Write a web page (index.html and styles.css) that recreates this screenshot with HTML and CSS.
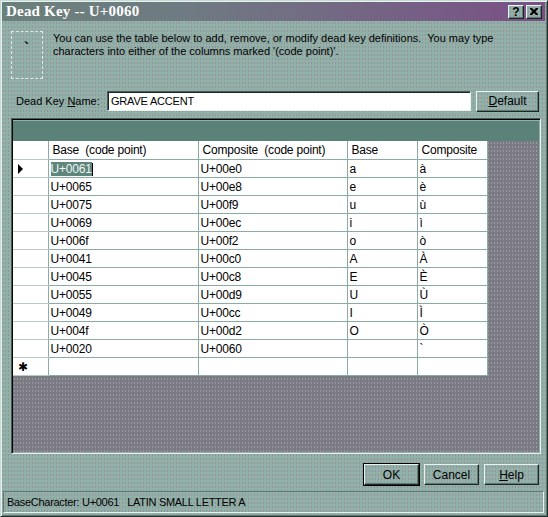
FILE: index.html
```html
<!DOCTYPE html>
<html lang="en">
<head>
    <meta charset="UTF-8">
    <title>Dead Key -- U+0060</title>
    <link rel="stylesheet" href="styles.css">
</head>
<body>

    <div class="window">
        <div class="titlebar">
            <span class="title">Dead Key -- U+0060</span>
            <div class="capbuttons">
                <span class="capbtn">?</span>
                <span class="capbtn">
                    <svg width="8" height="7" viewBox="0 0 8 7">
                        <path d="M0 0h2l2 2 2-2h2v1l-2.5 2.5 2.5 2.5v1h-2l-2-2-2 2h-2v-1l2.5-2.5-2.5-2.5z" fill="#000"/>
                    </svg>
                </span>
            </div>
        </div>

        <div class="content">
            <div class="intro">
                <div class="keybox">`</div>
                <p class="introtext">You can use the table below to add, remove, or modify dead key definitions.&nbsp; You may type characters into either of the columns marked '(code point)'.</p>
            </div>

            <div class="namerow">
                <label class="namelabel">Dead Key <u>N</u>ame:</label>
                <div class="namebox">GRAVE ACCENT</div>
                <span class="btn defaultbtn"><u>D</u>efault</span>
            </div>

            <div class="grid">
                <div class="caption"></div>
                <div class="gridarea">
                    <table class="keys">
                        <colgroup>
                            <col class="c0"><col class="c1"><col class="c2"><col class="c3"><col class="c4">
                        </colgroup>
                        <tr class="head">
                            <td class="rowhead"></td>
                            <td>Base  (code point)</td>
                            <td>Composite  (code point)</td>
                            <td>Base</td>
                            <td>Composite</td>
                        </tr>
                        <tr>
                            <td class="rowhead"><span class="arrow"></span></td>
                            <td><span class="selected">U+0061</span><span class="caret"></span></td>
                            <td>U+00e0</td><td>a</td><td>à</td>
                        </tr>
                        <tr><td class="rowhead"></td><td>U+0065</td><td>U+00e8</td><td>e</td><td>è</td></tr>
                        <tr><td class="rowhead"></td><td>U+0075</td><td>U+00f9</td><td>u</td><td>ù</td></tr>
                        <tr><td class="rowhead"></td><td>U+0069</td><td>U+00ec</td><td>i</td><td>ì</td></tr>
                        <tr><td class="rowhead"></td><td>U+006f</td><td>U+00f2</td><td>o</td><td>ò</td></tr>
                        <tr><td class="rowhead"></td><td>U+0041</td><td>U+00c0</td><td>A</td><td>À</td></tr>
                        <tr><td class="rowhead"></td><td>U+0045</td><td>U+00c8</td><td>E</td><td>È</td></tr>
                        <tr><td class="rowhead"></td><td>U+0055</td><td>U+00d9</td><td>U</td><td>Ù</td></tr>
                        <tr><td class="rowhead"></td><td>U+0049</td><td>U+00cc</td><td>I</td><td>Ì</td></tr>
                        <tr><td class="rowhead"></td><td>U+004f</td><td>U+00d2</td><td>O</td><td>Ò</td></tr>
                        <tr><td class="rowhead"></td><td>U+0020</td><td>U+0060</td><td></td><td>`</td></tr>
                        <tr><td class="rowhead star">✱</td><td></td><td></td><td></td><td></td></tr>
                    </table>
                </div>
            </div>

            <div class="buttonrow">
                <span class="btn okbtn">OK</span>
                <span class="btn">Cancel</span>
                <span class="btn"><u>H</u>elp</span>
            </div>
        </div>

        <div class="statusbar">BaseCharacter: U+0061   LATIN SMALL LETTER A</div>
    </div>

</body>
</html>
```

FILE: styles.css
```css
html{
    margin: 0;
}

body{
    margin: 0;
    width: 548px;
    height: 517px;
    overflow: hidden;
    font-family: "Liberation Sans", Arial, sans-serif;
    font-size: 11px;
    color: #000;
}

/* the dithered teal face colour */
.window, .capbtn, .btn, .rowhead, .head td{
    background-color: #91b0a8;
    background-image: radial-gradient(circle, rgba(150,110,140,0.45) 0.6px, transparent 0.9px);
    background-size: 3px 4px;
}

.window{
    box-sizing: border-box;
    width: 548px;
    height: 517px;
    border: 1px solid;
    border-color: #c6dad4 #22302c #22302c #c6dad4;
    box-shadow: inset 1px 1px 0 #e8f2ef, inset -1px -1px 0 #5f7a73;
    padding: 1px 2px 2px 1px;
    display: flex;
    flex-direction: column;
}

.titlebar{
    height: 19px;
    display: flex;
    align-items: center;
    justify-content: space-between;
    background: linear-gradient(to right, #6a807b 0%, #6f7a82 35%, #7a4f86 100%);
}

.title{
    font-family: "Liberation Serif", "Times New Roman", serif;
    font-weight: bold;
    font-size: 15px;
    color: #fff;
    padding-left: 4px;
    letter-spacing: 0.2px;
}

.capbuttons{
    display: flex;
    gap: 2px;
    padding-right: 3px;
}

.capbtn{
    box-sizing: border-box;
    width: 16px;
    height: 14px;
    display: flex;
    align-items: center;
    justify-content: center;
    font-weight: bold;
    font-size: 12px;
    border: 1px solid;
    border-color: #e8f2ef #1c2824 #1c2824 #e8f2ef;
    box-shadow: inset -1px -1px 0 #5f7a73;
}

.content{
    flex: 1;
    padding: 10px 4px 0 9px;
    display: flex;
    flex-direction: column;
}

.intro{
    display: flex;
    align-items: flex-start;
}

.keybox{
    box-sizing: border-box;
    width: 32px;
    height: 48px;
    border: 1px dashed #dfe9e6;
    font-size: 15px;
    font-weight: bold;
    padding: 9px 0 0 12px;
    line-height: 14px;
}

.introtext{
    margin: 1px 0 0 10px;
    line-height: 13px;
    width: 470px;
}

.namerow{
    display: flex;
    align-items: center;
    margin-top: 11px;
    height: 22px;
}

.namelabel{
    width: 91px;
    padding-left: 5px;
}

.namebox{
    box-sizing: border-box;
    width: 364px;
    height: 20px;
    background: #fff;
    border: 1px solid;
    border-color: #4a5e59 #e8f2ef #e8f2ef #4a5e59;
    box-shadow: inset 1px 1px 0 #1c2824;
    padding: 3px 0 0 3px;
    font-size: 11px;
    letter-spacing: -0.2px;
}

.btn{
    box-sizing: border-box;
    display: flex;
    align-items: center;
    justify-content: center;
    width: 55px;
    height: 21px;
    border: 1px solid;
    border-color: #e8f2ef #1c2824 #1c2824 #e8f2ef;
    box-shadow: inset -1px -1px 0 #5f7a73;
    font-size: 12px;
}

.defaultbtn{
    width: 63px;
    margin-left: 5px;
}

.grid{
    margin-top: 6px;
    width: 530px;
    height: 336px;
    box-sizing: border-box;
    border: 1px solid;
    border-color: #4a5e59 #e8f2ef #e8f2ef #4a5e59;
    box-shadow: inset 1px 1px 0 #000;
    padding: 2px 1px 1px 1px;
    display: flex;
    flex-direction: column;
    background: #91b0a8;
}

.caption{
    height: 20px;
    background: #5b8279;
    flex-shrink: 0;
}

.gridarea{
    flex: 1;
    background-color: #7a7a82;
    background-image: radial-gradient(circle, rgba(190,180,200,0.5) 0.6px, transparent 0.9px);
    background-size: 3px 4px;
}

.keys{
    border-collapse: collapse;
    table-layout: fixed;
    width: 474px;
}

.c0{ width: 35px; }
.c1{ width: 150px; }
.c2{ width: 149px; }
.c3{ width: 70px; }
.c4{ width: 70px; }

.keys td{
    height: 17px;
    padding: 0 0 0 2px;
    background: #fff;
    border: 1px solid #8aaca4;
    white-space: pre;
    font-size: 12px;
    letter-spacing: -0.2px;
    line-height: 16px;
    overflow: hidden;
}

.keys tr:first-child td{
    border-top: none;
}

.keys td:first-child{
    border-left: none;
}

.keys .head td{
    height: 18px;
    padding-left: 4px;
}

.keys .rowhead{
    border-color: #91b0a8;
    border-right-color: #8aaca4;
    border-bottom-color: #b7ccc6;
    padding-left: 5px;
}

.arrow{
    display: inline-block;
    width: 0;
    height: 0;
    border-top: 5px solid transparent;
    border-bottom: 5px solid transparent;
    border-left: 5px solid #000;
    vertical-align: middle;
}

.star{
    font-family: "DejaVu Sans", sans-serif;
    font-size: 12px;
}

.selected{
    background: #5f867d;
    color: #eef5f3;
}

.caret{
    display: inline-block;
    width: 1px;
    height: 13px;
    background: #000;
    vertical-align: middle;
}

.buttonrow{
    display: flex;
    justify-content: flex-end;
    gap: 5px;
    margin-top: 10px;
    padding-right: 2px;
}

.okbtn{
    outline: 1px solid #000;
}

.statusbar{
    box-sizing: border-box;
    height: 22px;
    margin: 0 1px 1px 1px;
    border: 1px solid;
    border-color: #5f7a73 #e8f2ef #e8f2ef #5f7a73;
    padding: 4px 0 0 3px;
    font-size: 11px;
    letter-spacing: -0.3px;
    white-space: pre;
}
```
